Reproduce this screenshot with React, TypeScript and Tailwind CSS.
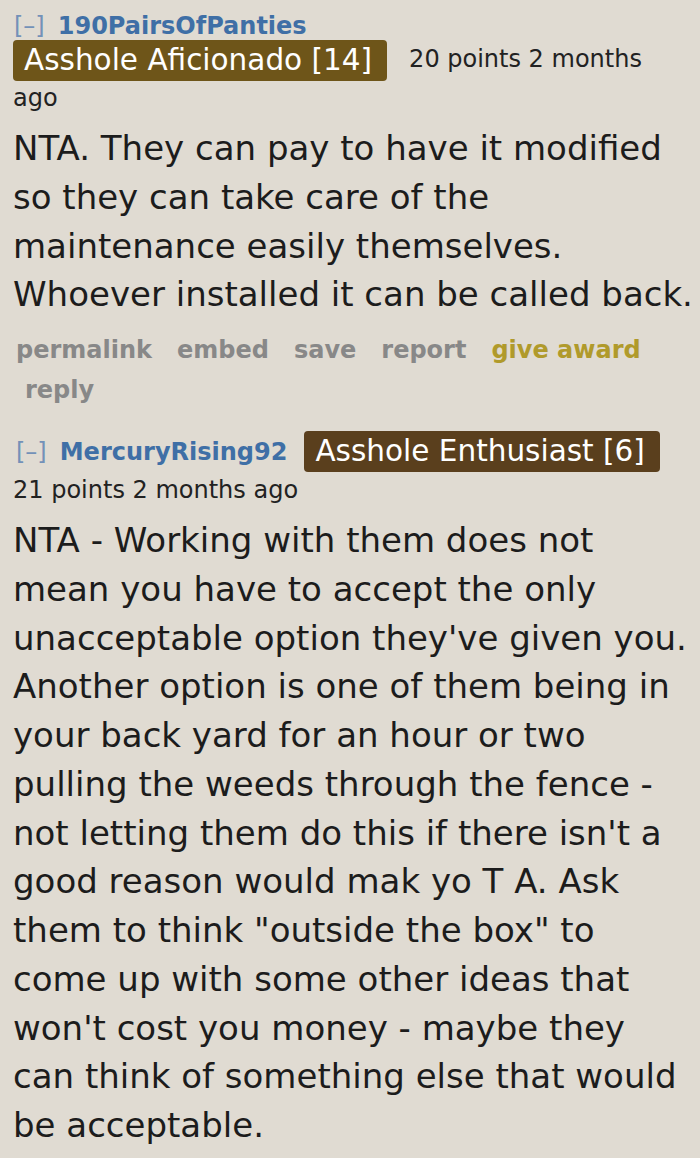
import React from 'react';

const font = { fontFamily: '"DejaVu Sans", Verdana, sans-serif' };

function Flair({ text, tone }: { text: string; tone: 'olive' | 'brown' }) {
  return (
    <span
      className={
        'inline-flex h-[41px] items-center rounded-[4px] pl-[11px] pr-[15px] text-[29.5px] text-white ' +
        (tone === 'olive' ? 'bg-[#6e5519]' : 'bg-[#5a3f1d]')
      }
    >
      {text}
    </span>
  );
}

function Body({ lines }: { lines: string[] }) {
  return (
    <div className="text-[34px] leading-[48.75px] text-[#1c1c1c] whitespace-nowrap">
      {lines.map((l, i) => (
        <div key={i}>{l}</div>
      ))}
    </div>
  );
}

export default function App() {
  const first = [
    'NTA. They can pay to have it modified',
    'so they can take care of the',
    'maintenance easily themselves.',
    'Whoever installed it can be called back.',
  ];
  const second = [
    'NTA - Working with them does not',
    'mean you have to accept the only',
    "unacceptable option they've given you.",
    'Another option is one of them being in',
    'your back yard for an hour or two',
    'pulling the weeds through the fence -',
    "not letting them do this if there isn't a",
    'good reason would mak yo T A. Ask',
    'them to think "outside the box" to',
    'come up with some other ideas that',
    "won't cost you money - maybe they",
    'can think of something else that would',
    'be acceptable.',
  ];

  return (
    <div style={font} className="w-[700px] h-[1158px] overflow-hidden bg-[#e0dbd2] pl-[13px]">
      {/* first comment */}
      <div className="flex h-[40px] items-center pt-[12px] text-[24px]">
        <span className="text-[#7391b8] ml-[1px]">[–]</span>
        <span className="ml-[13px] font-bold text-[#3f6fa6]">190PairsOfPanties</span>
      </div>
      <div className="flex h-[41px] items-center">
        <Flair text="Asshole Aficionado [14]" tone="olive" />
        <span className="ml-[22px] mb-[4px] text-[24px] text-[#222]">20 points 2 months</span>
      </div>
      <div className="flex h-[34px] items-center text-[24px] text-[#222]">ago</div>
      <div className="pt-[9px]">
        <Body lines={first} />
      </div>
      <div className="mt-[10px] flex h-[42px] items-center gap-[25px] pl-[3px] text-[24px] font-bold text-[#888]">
        <span>permalink</span>
        <span>embed</span>
        <span>save</span>
        <span>report</span>
        <span className="text-[#b09a2b]">give award</span>
      </div>
      <div className="flex h-[37px] items-center pl-[12px] text-[24px] font-bold text-[#888]">reply</div>

      {/* second comment */}
      <div className="mt-[23px] flex h-[41px] items-center">
        <span className="text-[24px] text-[#7391b8] ml-[3px]">[–]</span>
        <span className="ml-[13px] text-[24px] font-bold text-[#3f6fa6]">MercuryRising92</span>
        <span className="ml-[17px]">
          <Flair text="Asshole Enthusiast [6]" tone="brown" />
        </span>
      </div>
      <div className="flex h-[36px] items-center text-[24px] text-[#222]">21 points 2 months ago</div>
      <div className="pt-[8px]">
        <Body lines={second} />
      </div>
    </div>
  );
}
